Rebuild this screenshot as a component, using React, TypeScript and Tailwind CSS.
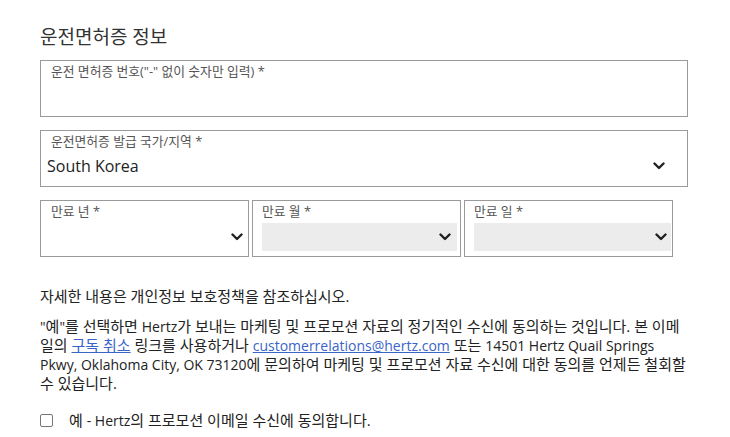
import React from "react";

const Chevron = () => (
  <svg width="12" height="8" viewBox="0 0 12 8" className="shrink-0">
    <path d="M1.5 1.5 L6 6 L10.5 1.5" fill="none" stroke="#222" strokeWidth="2.4" strokeLinecap="round" strokeLinejoin="round" />
  </svg>
);

const L = ({ children }: { children: React.ReactNode }) => <span className="text-[14px]">{children}</span>;
const A = ({ children }: { children: React.ReactNode }) => (
  <span className="text-[#3b64c8] underline">{children}</span>
);

export default function App() {
  const font = { fontFamily: '"Open Sans", "Noto Sans CJK KR", sans-serif' };
  return (
    <div className="w-[730px] h-[437px] bg-white text-[#222] overflow-hidden" style={font}>
      <div className="pl-[40px] pt-[24px] w-[688px]">
        <h2 className="text-[19px] leading-[26px] text-[#333] font-normal">운전면허증 정보</h2>

        <div className="mt-[10px] h-[57px] border border-[#9a9a9a] pl-[10px] pt-[2px]">
          <div className="text-[12.8px] leading-[16px] text-[#555]">운전 면허증 번호("-" 없이 숫자만 입력) *</div>
        </div>

        <div className="mt-[13px] h-[57px] border border-[#9a9a9a] pl-[6px] pr-[22px] pt-[2px]">
          <div className="text-[12.8px] leading-[16px] text-[#555] pl-[4px]">운전면허증 발급 국가/지역 *</div>
          <div className="flex items-center justify-between mt-[2px]">
            <span className="text-[16px] leading-[30px] text-[#222]">South Korea</span>
            <Chevron />
          </div>
        </div>

        <div className="mt-[13px] flex gap-[3px]">
          <div className="w-[209px] h-[57px] border border-[#9a9a9a] pl-[10px] pr-[3px] pt-[2px]">
            <div className="text-[12.8px] leading-[16px] text-[#555]">만료 년 *</div>
            <div className="mt-[4px] h-[28px] flex items-center justify-end pr-[2px]">
              <Chevron />
            </div>
          </div>
          <div className="w-[209px] h-[57px] border border-[#9a9a9a] pl-[9px] pr-[3px] pt-[2px]">
            <div className="text-[12.8px] leading-[16px] text-[#555]">만료 월 *</div>
            <div className="mt-[4px] h-[28px] bg-[#ececec] flex items-center justify-end pr-[6px]">
              <Chevron />
            </div>
          </div>
          <div className="w-[209px] h-[57px] border border-[#9a9a9a] pl-[9px] pr-[1px] pt-[2px]">
            <div className="text-[12.8px] leading-[16px] text-[#555]">만료 일 *</div>
            <div className="mt-[4px] h-[28px] bg-[#ececec] flex items-center justify-end pr-[4px]">
              <Chevron />
            </div>
          </div>
        </div>

        <p className="mt-[30px] text-[15px] leading-[19px] text-[#222]">자세한 내용은 개인정보 보호정책을 참조하십시오.</p>

        <div className="mt-[11px] text-[15px] leading-[19px] text-[#222] whitespace-nowrap">
          <div>
            <L>"</L>예<L>"</L>를 선택하면 <L>Hertz</L>가 보내는 마케팅 및 프로모션 자료의 정기적인 수신에 동의하는 것입니다. 본 이메
          </div>
          <div>
            일의 <A>구독 취소</A> 링크를 사용하거나 <L><A>customerrelations@hertz.com</A></L> 또는 <L>14501 Hertz Quail Springs</L>
          </div>
          <div>
            <L>Pkwy, Oklahoma City, OK 73120</L>에 문의하여 마케팅 및 프로모션 자료 수신에 대한 동의를 언제든 철회할
          </div>
          <div>수 있습니다.</div>
        </div>

        <div className="mt-[18px] flex items-center">
          <span className="w-[13px] h-[13px] border border-[#777] rounded-[2px] bg-white shrink-0" />
          <span className="ml-[16px] text-[15px] leading-[19px] text-[#222]">
            예 <L>- Hertz</L>의 프로모션 이메일 수신에 동의합니다.
          </span>
        </div>
      </div>
    </div>
  );
}
